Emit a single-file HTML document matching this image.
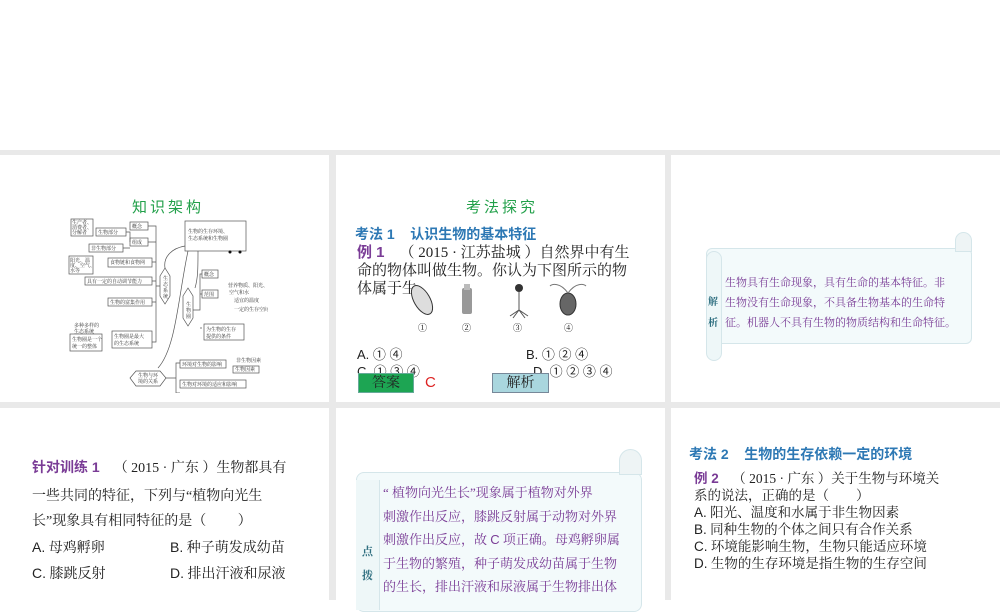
<!DOCTYPE html>
<html><head><meta charset="utf-8"><style>
*{margin:0;padding:0;box-sizing:border-box}
body{width:1000px;height:600px;background:#fff;position:relative;overflow:hidden;font-family:"Liberation Serif","Noto Serif CJK SC","Noto Sans CJK SC",serif;color:#222}
.g{position:absolute;background:#e9e9e9}
.s{position:absolute;background:#fff}
.a{position:absolute;white-space:nowrap}
.sans{font-family:"Liberation Sans","Noto Sans CJK SC",sans-serif}
.grn{color:#22a04a}
.blu{color:#2d78b4;font-weight:bold}
.pur{color:#7a3c96;font-weight:bold}
.t15{font-size:15px;line-height:18px}
.mm text{font-size:5px;fill:#333;font-family:"Noto Serif CJK SC",serif}
.mm rect,.mm path,.mm polygon{fill:none;stroke:#555;stroke-width:.7}
</style></head><body>
<div class="g" style="left:0;top:150px;width:1000px;height:450px"></div>
<div class="s" style="left:0;top:155px;width:329px;height:247px"></div>
<div class="s" style="left:336px;top:155px;width:329px;height:247px"></div>
<div class="s" style="left:671px;top:155px;width:329px;height:247px"></div>
<div class="s" style="left:0;top:408px;width:329px;height:192px"></div>
<div class="s" style="left:336px;top:408px;width:329px;height:192px"></div>
<div class="s" style="left:671px;top:408px;width:329px;height:192px"></div>

<!-- slide 1 -->
<div class="a grn" style="left:132px;top:196px;font-size:15px;letter-spacing:3px;font-family:'Noto Sans CJK SC',sans-serif">知识架构</div>
<svg class="mm" style="position:absolute;left:68px;top:218px" width="200" height="175" viewBox="0 0 200 175">
<rect x="3" y="1" width="22" height="17"/><text x="4" y="6">生产者、</text><text x="4" y="11">消费者、</text><text x="4" y="16">分解者</text>
<rect x="28" y="10" width="30" height="8"/><text x="30" y="16">生物部分</text>
<rect x="62" y="4" width="18" height="8"/><text x="64" y="10">概念</text>
<rect x="62" y="20" width="18" height="8"/><text x="64" y="26">组成</text>
<rect x="21" y="26" width="34" height="8"/><text x="23" y="32">非生物部分</text>
<rect x="1" y="38" width="24" height="18"/><text x="2" y="44">阳光、温</text><text x="2" y="49">度、空气、</text><text x="2" y="54">水等</text>
<rect x="40" y="40" width="44" height="9"/><text x="42" y="46">食物链和食物网</text>
<rect x="17" y="59" width="67" height="8"/><text x="19" y="65">具有一定的自动调节能力</text>
<rect x="40" y="80" width="44" height="8"/><text x="42" y="86">生物的富集作用</text>
<text x="6" y="109">多种多样的</text><text x="6" y="115">生态系统</text>
<rect x="2" y="116" width="32" height="17"/><text x="4" y="123">生物圈是一个</text><text x="4" y="130">统一的整体</text>
<rect x="44" y="113" width="40" height="17"/><text x="46" y="120">生物圈是最大</text><text x="46" y="127">的生态系统</text>
<path d="M80 8H88V124H84M80 24H88M84 44H88M84 63H88M84 84H88M58 14H62V24M55 30H62M88 68H92"/>
<polygon points="92,58 97,50 102,58 102,78 97,86 92,78"/><text x="95" y="62">生</text><text x="95" y="68">态</text><text x="95" y="74">系</text><text x="95" y="80">统</text>
<rect x="117" y="3" width="61" height="30"/><text x="120" y="15">生物的生存环境、</text><text x="120" y="22">生态系统和生物圈</text>
<circle cx="162" cy="34" r="1.5" fill="#111"/><circle cx="172" cy="34" r="1.5" fill="#111"/>
<path d="M117 28C105 30 95 38 97 50M120 33C110 80 108 130 90 150M130 33C130 50 130 60 127 70"/>
<polygon points="115,78 120,70 125,78 125,100 120,108 115,100"/><text x="118" y="88">生</text><text x="118" y="94">物</text><text x="118" y="100">圈</text>
<path d="M125 92H132V56H134M132 76H134M132 110H134"/>
<rect x="134" y="52" width="16" height="8"/><text x="136" y="58">概念</text>
<rect x="134" y="72" width="16" height="8"/><text x="136" y="78">范围</text>
<text x="160" y="69">营养物质、阳光、</text><text x="161" y="76">空气和水</text>
<text x="166" y="84">适宜的温度</text><text x="166" y="93">一定的生存空间</text>
<rect x="136" y="106" width="40" height="16"/><text x="138" y="113">为生物的生存</text><text x="138" y="120">提供的条件</text>
<polygon points="62,160 68,153 92,153 98,160 92,168 68,168"/><text x="70" y="159">生物与环</text><text x="70" y="165">境的关系</text>
<path d="M98 160H108V145H112M108 160V175H112"/>
<rect x="112" y="142" width="46" height="8"/><text x="114" y="148">环境对生物的影响</text>
<text x="168" y="144">非生物因素</text><rect x="165" y="148" width="26" height="7"/><text x="167" y="153">生物因素</text>
<rect x="112" y="162" width="66" height="8"/><text x="114" y="168">生物对环境的适应和影响</text>
</svg>

<!-- slide 2 -->
<div class="a grn" style="left:466px;top:196px;font-size:15px;letter-spacing:3px;font-family:'Noto Sans CJK SC',sans-serif">考法探究</div>
<div class="a blu sans" style="left:355px;top:224px;font-size:14px">考法 1 &nbsp;&nbsp; 认识生物的基本特征</div>
<div class="a t15" style="left:357px;top:244px"><span class="pur sans">例 1</span> &nbsp;&nbsp; （ 2015 · 江苏盐城 ）自然界中有生</div>
<div class="a t15" style="left:357px;top:262px">命的物体叫做生物。你认为下图所示的物</div>
<div class="a t15" style="left:357px;top:280px">体属于生</div>
<svg style="position:absolute;left:400px;top:282px" width="190" height="52" viewBox="0 0 190 52">
<ellipse cx="22" cy="18" rx="8" ry="16" transform="rotate(-30 22 18)" fill="#ddd" stroke="#333"/>
<rect x="62" y="6" width="10" height="26" rx="2" fill="#999"/><rect x="64" y="2" width="6" height="6" fill="#bbb"/>
<circle cx="119" cy="6" r="4" fill="#333"/><path d="M119 10V28M113 36L119 28L125 36M110 34L119 28L128 34" stroke="#555" fill="none"/>
<ellipse cx="168" cy="22" rx="8" ry="11" fill="#666" stroke="#333"/><path d="M168 11C160 0 152 2 150 4M168 11C176 0 184 2 186 4" stroke="#777" fill="none"/>
<text font-size="9" x="18" y="49">①</text><text font-size="9" x="62" y="49">②</text><text font-size="9" x="113" y="49">③</text><text font-size="9" x="164" y="49">④</text>
</svg>
<div class="a sans" style="left:357px;top:344px;font-size:13px">A. ① ④</div>
<div class="a sans" style="left:526px;top:344px;font-size:13px">B. ① ② ④</div>
<div class="a sans" style="left:357px;top:361px;font-size:13px">C. ① ③ ④</div>
<div class="a sans" style="left:533px;top:361px;font-size:13px">D. ① ② ③ ④</div>
<div class="a" style="left:358px;top:373px;width:56px;height:20px;background:#1da553;border:1px solid #6a9;font-size:14px;text-align:center;line-height:19px;color:#222">答案</div>
<div class="a sans" style="left:425px;top:374px;font-size:15px;color:#d22">C</div>
<div class="a" style="left:492px;top:373px;width:57px;height:20px;background:#a9d6de;border:1px solid #789;font-size:14px;text-align:center;line-height:19px">解析</div>

<!-- slide 3 -->
<div class="a" style="left:706px;top:248px;width:266px;height:96px;background:#f3fafb;border:1px solid #d5e6ea;border-radius:6px"></div>
<div class="a" style="left:706px;top:251px;width:16px;height:110px;background:#eef7f8;border:1px solid #d5e6ea;border-radius:8px"></div>
<div class="a" style="left:955px;top:232px;width:17px;height:20px;background:#eef4f5;border:1px solid #d5e6ea;border-radius:9px 9px 0 0"></div>
<div class="a" style="left:708px;top:292px;font-size:10px;color:#2f6f80;font-weight:bold;line-height:21px;white-space:normal;width:12px">解析</div>
<div class="a" style="left:725px;top:273px;font-size:11px;color:#7a3c96;line-height:20px">生物具有生命现象，具有生命的基本特征。非<br>生物没有生命现象，不具备生物基本的生命特<br>征。机器人不具有生物的物质结构和生命特征。</div>

<!-- slide 4 -->
<div class="a t15" style="left:32px;top:458px;font-size:14px"><span class="pur sans">针对训练 1</span> &nbsp;&nbsp; （ 2015 · 广东 ）生物都具有</div>
<div class="a" style="left:32px;top:485px;font-size:14px">一些共同的特征，下列与“植物向光生</div>
<div class="a" style="left:32px;top:510px;font-size:14px">长”现象具有相同特征的是（ &nbsp;&nbsp;&nbsp;&nbsp;&nbsp;&nbsp;&nbsp; ）</div>
<div class="a" style="left:32px;top:537px;font-size:14px"><span class="sans">A.</span> 母鸡孵卵</div>
<div class="a" style="left:170px;top:537px;font-size:14px"><span class="sans">B.</span> 种子萌发成幼苗</div>
<div class="a" style="left:32px;top:563px;font-size:14px"><span class="sans">C.</span> 膝跳反射</div>
<div class="a" style="left:170px;top:563px;font-size:14px"><span class="sans">D.</span> 排出汗液和尿液</div>

<!-- slide 5 -->
<div class="a" style="left:356px;top:472px;width:286px;height:140px;background:#f3fafb;border:1px solid #d5e6ea;border-radius:8px"></div>
<div class="a" style="left:356px;top:480px;width:24px;height:130px;background:#eef7f8;border-right:1px solid #d5e6ea"></div>
<div class="a" style="left:619px;top:449px;width:23px;height:26px;background:#eef4f5;border:1px solid #d5e6ea;border-radius:12px 12px 0 0"></div>
<div class="a" style="left:362px;top:540px;font-size:11px;color:#2f6f80;font-weight:bold;line-height:24px;white-space:normal;width:12px">点拨</div>
<div class="a" style="left:383px;top:481px;font-size:13px;color:#7a3c96;line-height:23.5px">“ 植物向光生长”现象属于植物对外界<br>刺激作出反应，膝跳反射属于动物对外界<br>刺激作出反应，故 <span class="sans">C</span> 项正确。母鸡孵卵属<br>于生物的繁殖，种子萌发成幼苗属于生物<br>的生长，排出汗液和尿液属于生物排出体</div>

<!-- slide 6 -->
<div class="a blu sans" style="left:689px;top:444px;font-size:14px">考法 2 &nbsp;&nbsp; 生物的生存依赖一定的环境</div>
<div class="a" style="left:694px;top:470px;font-size:13.5px;line-height:17px"><span class="pur sans">例 2</span> &nbsp;&nbsp; （ 2015 · 广东 ）关于生物与环境关<br>系的说法，正确的是（ &nbsp;&nbsp;&nbsp;&nbsp;&nbsp;&nbsp; ）<br><span class="sans">A.</span> 阳光、温度和水属于非生物因素<br><span class="sans">B.</span> 同种生物的个体之间只有合作关系<br><span class="sans">C.</span> 环境能影响生物，生物只能适应环境<br><span class="sans">D.</span> 生物的生存环境是指生物的生存空间</div>
</body></html>
